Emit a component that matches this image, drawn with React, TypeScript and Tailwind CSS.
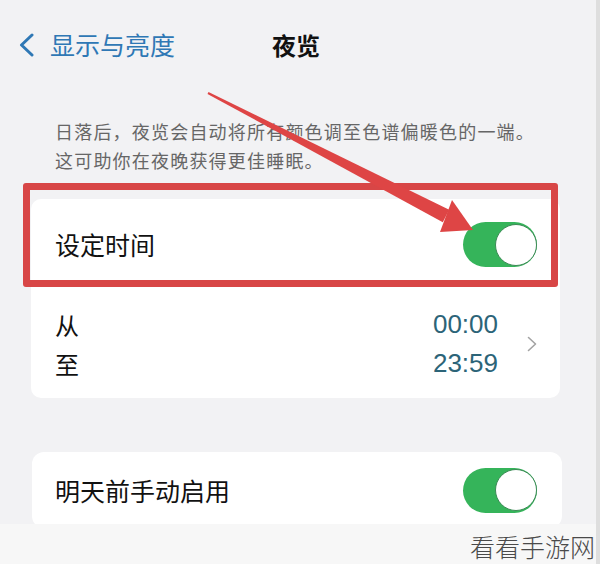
import React from "react";

const cjk = { fontFamily: '"Noto Sans CJK SC", "Noto Sans", sans-serif' };
const latin = { fontFamily: '"Liberation Sans", Arial, sans-serif' };

const Toggle = () => (
  <div className="flex h-[45px] w-[74px] items-center justify-end rounded-full bg-[#35b45a]">
    <div className="h-[42px] w-[42px] rounded-full border-[1.5px] border-[#3b8a55] bg-white" />
  </div>
);

const Arrow = () => (
  <svg
    className="pointer-events-none absolute left-0 top-0"
    width="600"
    height="564"
    viewBox="0 0 600 564"
  >
    <polygon
      points="207.5,93.9 208.5,92.1 449.2,209.8 442.8,222.2"
      fill="#de4545"
    />
    <polygon points="452,200 473,230 440,232" fill="#de4545" />
  </svg>
);

const App = () => {
  return (
    <main
      className="relative h-[564px] w-[600px] overflow-hidden bg-[#f2f2f4]"
      style={cjk}
    >
      {/* header */}
      <div className="flex h-[25px] items-center pl-[18px] mt-[32px]">
        <svg width="17" height="24" viewBox="0 0 17 24">
          <path
            d="M14 2 L3.5 12 L14 22"
            fill="none"
            stroke="#2f78b5"
            strokeWidth="3"
            strokeLinecap="round"
            strokeLinejoin="round"
          />
        </svg>
        <span className="ml-[15px] text-[25px] leading-[25px] text-[#2f78b5]">
          显示与亮度
        </span>
        <span className="ml-[97px] text-[24px] font-bold leading-[25px] text-[#111]">
          夜览
        </span>
      </div>

      {/* description */}
      <p className="mt-[60px] pl-[55px] text-[18px] leading-[29px] tracking-[1.2px] text-[#666]">
        日落后，夜览会自动将所有颜色调至色谱偏暖色的一端。
        <br />
        这可助你在夜晚获得更佳睡眠。
      </p>

      {/* schedule card */}
      <div className="ml-[31px] mt-[24px] w-[529px] rounded-[10px] bg-white">
        <div className="flex h-[91px] items-center justify-between pl-[24px] pr-[23px]">
          <span className="text-[25px] leading-none text-[#111]">设定时间</span>
          <Toggle />
        </div>
        <div className="flex h-[108px] items-center pl-[24px] pr-[23px]">
          <div className="flex flex-1 flex-col text-[24px] leading-[39px] text-[#111]">
            <span>从</span>
            <span>至</span>
          </div>
          <div
            className="flex flex-col items-end text-[26px] leading-[39px] text-[#2c6478]"
            style={latin}
          >
            <span>00:00</span>
            <span>23:59</span>
          </div>
          <svg className="ml-[29px]" width="10" height="16" viewBox="0 0 10 16">
            <path
              d="M1.5 1.5 L8.5 8 L1.5 14.5"
              fill="none"
              stroke="#a3a3a3"
              strokeWidth="1.6"
              strokeLinecap="round"
              strokeLinejoin="round"
            />
          </svg>
        </div>
      </div>

      {/* manual card */}
      <div className="ml-[32px] mt-[54px] flex h-[76px] w-[530px] items-center justify-between rounded-[12px] bg-white pl-[23px] pr-[25px]">
        <span className="text-[25px] leading-none text-[#111]">明天前手动启用</span>
        <Toggle />
      </div>

      {/* annotation */}
      <div className="absolute left-[23px] top-[183px] h-[104px] w-[535px] rounded-[3px] border-[7px] border-[#d84646]" />
      <Arrow />

      {/* watermark strip */}
      <div className="absolute bottom-0 left-0 h-[40px] w-full bg-[#f7f7f7]" />
      <div className="absolute right-0 top-0 h-full w-[4px] bg-[#dedede]" />
      <span className="absolute left-[470px] top-[532px] whitespace-nowrap text-[25px] font-light leading-[28px] text-[#4a4a4a]">
        看看手游网
      </span>
    </main>
  );
};

export default App;
